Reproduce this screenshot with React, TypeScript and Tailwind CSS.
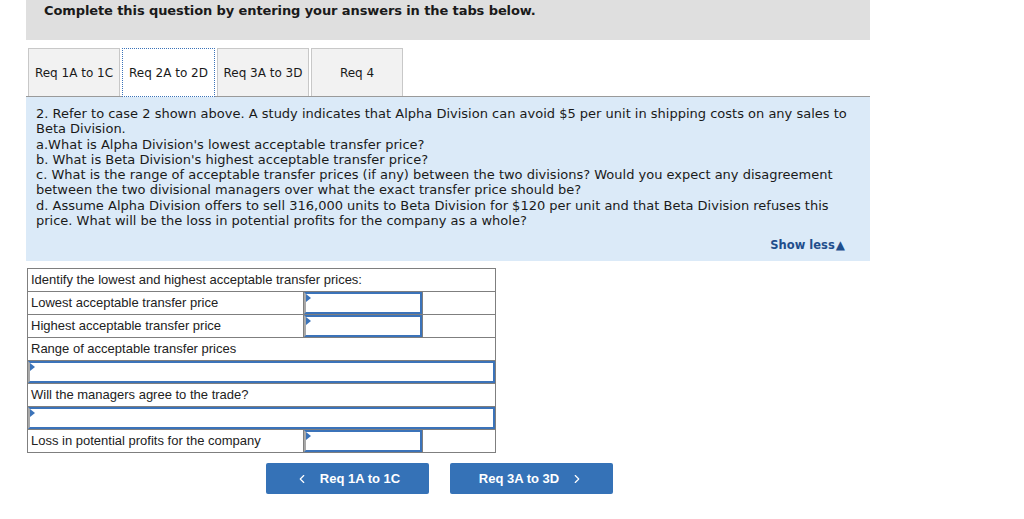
import React, { useState } from 'react';
import { ChevronLeft, ChevronRight } from 'lucide-react';

const TABS = ['Req 1A to 1C', 'Req 2A to 2D', 'Req 3A to 3D', 'Req 4'];

const Caret: React.FC = () => (
  <span className="absolute left-0 top-0 w-0 h-0 border-t-[4px] border-b-[4px] border-l-[5px] border-t-transparent border-b-transparent border-l-[#3b73b9]" />
);

const AnswerBox: React.FC<{ wide?: boolean }> = ({ wide }) => (
  <div className={`relative bg-white border-2 border-[#3b73b9] border-l-[#a9a9a9] ${wide ? 'h-[22px]' : 'h-[22px] w-[118px]'}`}>
    <Caret />
  </div>
);

const LabelRow: React.FC<{ text: string; box?: boolean }> = ({ text, box }) => (
  <tr className="h-[23px]">
    <td className="border border-[#7f7f7f] px-[3px]" colSpan={box ? 1 : 3}>{text}</td>
    {box && (
      <>
        <td className="border border-[#7f7f7f] p-0 align-middle"><AnswerBox /></td>
        <td className="border border-[#7f7f7f]" />
      </>
    )}
  </tr>
);

const WideRow: React.FC = () => (
  <tr className="h-[23px]">
    <td colSpan={3} className="border border-[#7f7f7f] p-0"><AnswerBox wide /></td>
  </tr>
);

export default function App() {
  const [active, setActive] = useState(1);

  return (
    <div className="w-[1024px] h-[519px] bg-white overflow-hidden font-['DejaVu_Sans',Verdana,sans-serif] text-[#1a1a1a]">
      <div className="ml-[26px] w-[844px]">
        {/* Header */}
        <div className="h-[40px] bg-[#dfdfdf] pl-[18px] pt-[1px]">
          <p className="text-[13px] font-bold tracking-[-0.1px]">Complete this question by entering your answers in the tabs below.</p>
        </div>

        {/* Tabs */}
        <div className="flex items-end mt-[8px] pl-[2px] h-[48px]">
          {TABS.map((t, i) => (
            <button
              key={t}
              onClick={() => setActive(i)}
              className={`h-[48px] w-[92px] text-[12px] mr-[2px] ${
                active === i
                  ? 'bg-white border border-dotted border-[#3b73b9] -mb-px h-[49px] w-[93px] relative z-10'
                  : 'bg-[#f2f2f2] border border-[#c8c8c8] border-b-0'
              }`}
            >
              {t}
            </button>
          ))}
        </div>

        {/* Question panel */}
        <div className="bg-[#dbeaf8] border-t border-[#9a9a9a] h-[165px] px-[10px] pt-[9px] text-[13px] leading-[15.3px] relative">
          <p>2. Refer to case 2 shown above. A study indicates that Alpha Division can avoid $5 per unit in shipping costs on any sales to Beta Division.</p>
          <p>a.What is Alpha Division's lowest acceptable transfer price?</p>
          <p>b. What is Beta Division's highest acceptable transfer price?</p>
          <p>c. What is the range of acceptable transfer prices (if any) between the two divisions? Would you expect any disagreement between the two divisional managers over what the exact transfer price should be?</p>
          <p>d. Assume Alpha Division offers to sell 316,000 units to Beta Division for $120 per unit and that Beta Division refuses this price. What will be the loss in potential profits for the company as a whole?</p>
          <div className="absolute right-[25px] top-[141px] text-[11.5px] font-bold text-[#1f4e8c] flex items-center">
            Show less<span className="text-[12px] ml-px">▲</span>
          </div>
        </div>

        {/* Answer table */}
        <table className="mt-[7px] ml-px w-[469px] border-collapse font-['Liberation_Sans',Arial,sans-serif] text-[13px] text-[#222]">
          <colgroup>
            <col className="w-[277px]" />
            <col className="w-[118px]" />
            <col className="w-[73px]" />
          </colgroup>
          <tbody>
            <LabelRow text="Identify the lowest and highest acceptable transfer prices:" />
            <LabelRow text="Lowest acceptable transfer price" box />
            <LabelRow text="Highest acceptable transfer price" box />
            <LabelRow text="Range of acceptable transfer prices" />
            <WideRow />
            <LabelRow text="Will the managers agree to the trade?" />
            <WideRow />
            <LabelRow text="Loss in potential profits for the company" box />
          </tbody>
        </table>

        {/* Navigation */}
        <div className="flex gap-[21px] mt-[10px] ml-[240px] font-['Liberation_Sans',Arial,sans-serif]">
          <button className="w-[163px] h-[31px] bg-[#3572b7] rounded-[2px] text-white text-[13px] font-bold flex items-center justify-center gap-[11px]">
            <ChevronLeft size={14} strokeWidth={2} />
            <span>Req 1A to 1C</span>
          </button>
          <button className="w-[163px] h-[31px] bg-[#3572b7] rounded-[2px] text-white text-[13px] font-bold flex items-center justify-center gap-[11px]">
            <span>Req 3A to 3D</span>
            <ChevronRight size={14} strokeWidth={2} />
          </button>
        </div>
      </div>
    </div>
  );
}
